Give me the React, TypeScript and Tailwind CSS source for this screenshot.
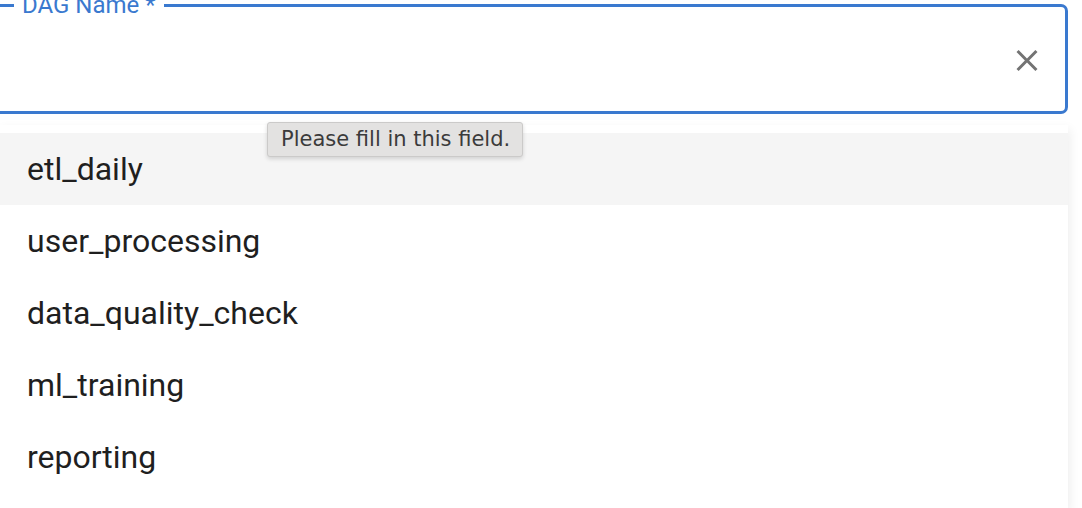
const dags = ['etl_daily', 'user_processing', 'data_quality_check', 'ml_training', 'reporting'];

export default function App() {
  return (
    <div className="w-[1082px] h-[508px] overflow-hidden bg-white relative" style={{ fontFamily: 'Roboto, "Noto Sans", sans-serif' }}>
      {/* Field */}
      <div className="ml-[-10px] w-[1078px] pt-[4px]">
        <div className="relative h-[110px] border-[3px] border-[#3a79cf] rounded-[7px] flex items-center justify-end pr-[20px]">
          <label className="absolute left-[21px] top-[-14px] bg-white px-[8px] text-[24px] leading-[24px] text-[#3a79cf]">
            DAG Name *
          </label>
          <button className="w-[36px] h-[36px] mt-[2px] flex items-center justify-center text-[#737373]">
            <svg viewBox="0 0 24 24" width="37" height="37" fill="currentColor">
              <path d="M19 6.41 17.59 5 12 10.59 6.41 5 5 6.41 10.59 12 5 17.59 6.41 19 12 13.41 17.59 19 19 17.59 13.41 12z" />
            </svg>
          </button>
        </div>
      </div>

      {/* Options */}
      <div className="mt-[11px] w-[1068px] pt-[8px] pb-[16px] bg-white shadow-[2px_4px_10px_rgba(0,0,0,0.07)]">
        {dags.map((d, i) => (
          <div
            key={d}
            className={`h-[72px] flex items-center pl-[27px] text-[32px] text-[#1f1f1f] ${i === 0 ? 'bg-[#f5f5f5]' : ''}`}
          >
            {d}
          </div>
        ))}
      </div>

      {/* Validation tooltip */}
      <div
        className="absolute left-[267px] top-[122px] w-[256px] h-[35px] flex items-center pl-[13px] bg-[#e3e2e1] border border-[#cbcac9] rounded-[3px] shadow-[0_2px_4px_rgba(0,0,0,0.15)] text-[21px] text-[#3b3b3b]"
        style={{ fontFamily: '"DejaVu Sans", Verdana, sans-serif' }}
      >
        Please fill in this field.
      </div>
    </div>
  );
}
